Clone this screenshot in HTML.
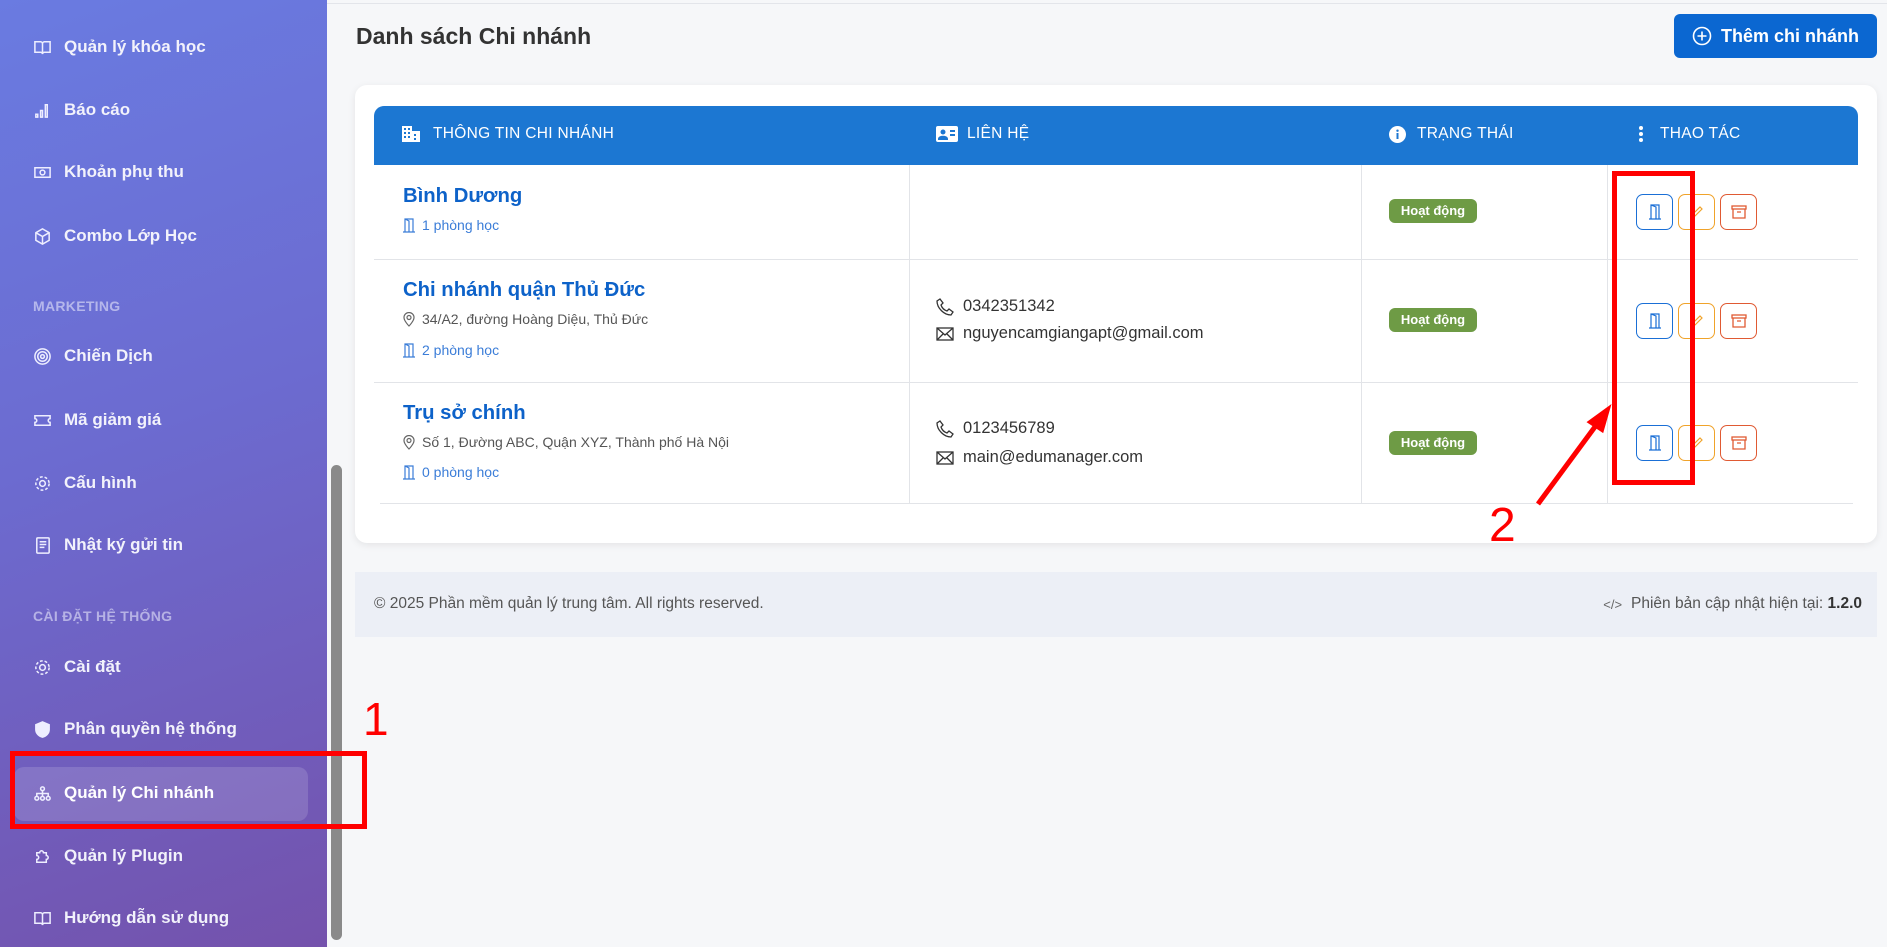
<!DOCTYPE html>
<html><head><meta charset="utf-8"><style>
*{margin:0;padding:0;box-sizing:border-box}
body{width:1887px;height:947px;overflow:hidden;background:#f6f7f9;font-family:"Liberation Sans","DejaVu Sans",sans-serif;position:relative}
.sb{position:absolute;left:0;top:0;width:327px;height:947px;background:linear-gradient(160deg,#6a7be1 0%,#6c6bd0 45%,#7452ac 100%)}
.it{position:absolute;left:33px;height:30px;display:flex;align-items:center;color:#f2f2fb;font-size:17px;font-weight:bold}
.it svg{width:19px;height:19px;margin-right:12px;fill:none;stroke:#eef;stroke-width:1.6}
.sec{position:absolute;left:33px;color:rgba(230,230,250,.6);font-size:14px;font-weight:bold;letter-spacing:.3px}
.ab{position:absolute}
.card{position:absolute;left:355px;top:85px;width:1522px;height:458px;background:#fff;border-radius:12px;box-shadow:0 2px 8px rgba(0,0,0,.08)}
.th{position:absolute;left:374px;top:106px;width:1484px;height:59px;background:#1c77d2;border-radius:10px 10px 0 0}
.ht{position:absolute;top:125px;color:#fff;font-size:15.5px;display:flex;align-items:center;letter-spacing:.3px}
.hl{position:absolute;background:#e2e4e8;height:1px}
.vl{position:absolute;background:#e2e4e8;width:1px}
.nm{position:absolute;left:403px;color:#0d62c9;font-size:20.3px;font-weight:bold}
.ad{position:absolute;left:403px;color:#555;font-size:14px;display:flex;align-items:center}
.rm{position:absolute;left:403px;color:#3b7dd8;font-size:14px;display:flex;align-items:center}
.ct{position:absolute;left:936px;color:#333;font-size:16.5px;display:flex;align-items:center}
.ct svg,.ad svg,.rm svg{margin-right:7px}
.bd{position:absolute;left:1389px;width:88px;height:24px;background:#6e9b45;color:#fff;border-radius:6px;font-size:13px;font-weight:bold;text-align:center;line-height:24px}
.bt{position:absolute;width:37px;height:36px;border:1.5px solid;border-radius:7px;display:flex;align-items:center;justify-content:center}
</style></head><body>
<div class="sb"></div>
<div class="it" style="top:32px"><svg viewBox="0 0 20 20"><path d="M2 4h6a2 2 0 0 1 2 2v11a2 2 0 0 0-2-2H2zM18 4h-6a2 2 0 0 0-2 2v11a2 2 0 0 1 2-2h6z"/></svg>Quản lý khóa học</div>
<div class="it" style="top:95px"><svg viewBox="0 0 20 20"><path d="M3 14h2v3H3zM8 10h2v7H8zM13 4h2v13h-2z"/></svg>Báo cáo</div>
<div class="it" style="top:157px"><svg viewBox="0 0 20 20"><rect x="2" y="5" width="16" height="10"/><circle cx="10" cy="10" r="2.5"/></svg>Khoản phụ thu</div>
<div class="it" style="top:221px"><svg viewBox="0 0 20 20"><path d="M10 2l7 4v8l-7 4-7-4V6zM3 6l7 4 7-4M10 10v8"/></svg>Combo Lớp Học</div>
<div class="sec" style="top:298px">MARKETING</div>
<div class="it" style="top:341px"><svg viewBox="0 0 20 20"><circle cx="10" cy="10" r="8"/><circle cx="10" cy="10" r="5"/><circle cx="10" cy="10" r="2"/></svg>Chiến Dịch</div>
<div class="it" style="top:405px"><svg viewBox="0 0 20 20"><path d="M2 5h16v3a2 2 0 0 0 0 4v3H2v-3a2 2 0 0 0 0-4z"/></svg>Mã giảm giá</div>
<div class="it" style="top:468px"><svg viewBox="0 0 20 20"><circle cx="10" cy="10" r="3"/><circle cx="10" cy="10" r="7" stroke-dasharray="3 2"/></svg>Cấu hình</div>
<div class="it" style="top:530px"><svg viewBox="0 0 20 20"><rect x="4" y="2" width="13" height="16" rx="1"/><path d="M7 6h7M7 9h7M7 12h5"/></svg>Nhật ký gửi tin</div>
<div class="sec" style="top:608px">CÀI ĐẶT HỆ THỐNG</div>
<div class="it" style="top:652px"><svg viewBox="0 0 20 20"><circle cx="10" cy="10" r="3"/><circle cx="10" cy="10" r="7" stroke-dasharray="3 2"/></svg>Cài đặt</div>
<div class="it" style="top:714px"><svg viewBox="0 0 20 20"><path d="M10 2l7 3v5c0 4-3 7-7 8-4-1-7-4-7-8V5z" fill="#eef"/></svg>Phân quyền hệ thống</div>
<div class="ab" style="left:14px;top:767px;width:294px;height:54px;background:rgba(255,255,255,.14);border-radius:10px"></div>
<div class="it" style="top:778px;color:#fff"><svg viewBox="0 0 20 20"><circle cx="10" cy="5" r="2"/><circle cx="4" cy="15" r="2"/><circle cx="10" cy="15" r="2"/><circle cx="16" cy="15" r="2"/><path d="M10 7v6M4 13v-3h12v3"/></svg>Quản lý Chi nhánh</div>
<div class="it" style="top:841px"><svg viewBox="0 0 20 20"><path d="M4 6h3a2 2 0 1 1 4 0h3v3a2 2 0 1 1 0 4v3H4v-3a2 2 0 1 0 0-4z"/></svg>Quản lý Plugin</div>
<div class="it" style="top:903px"><svg viewBox="0 0 20 20"><path d="M2 4h6a2 2 0 0 1 2 2v11a2 2 0 0 0-2-2H2zM18 4h-6a2 2 0 0 0-2 2v11a2 2 0 0 1 2-2h6z"/></svg>Hướng dẫn sử dụng</div>
<div class="ab" style="left:331px;top:465px;width:11px;height:475px;background:#8a8a8a;border-radius:6px"></div>
<div class="ab" style="left:327px;top:0;width:1560px;height:4px;border-bottom:1px solid #e3e5ea;background:#f6f7f9"></div>

<div class="ab" style="left:356px;top:23px;font-size:23px;font-weight:bold;color:#333">Danh sách Chi nhánh</div>
<div class="ab" style="left:1674px;top:14px;width:203px;height:44px;background:#0b67d1;border-radius:6px;color:#fff;font-size:18px;font-weight:bold;display:flex;align-items:center;justify-content:center"><svg width="20" height="20" viewBox="0 0 20 20" style="margin-right:9px" fill="none" stroke="#fff" stroke-width="1.6"><circle cx="10" cy="10" r="8.5"/><path d="M10 5.5v9M5.5 10h9"/></svg>Thêm chi nhánh</div>

<div class="card"></div>
<div class="th"></div>
<div class="ht" style="left:402px"><svg width="18" height="16" viewBox="0 0 18 16" fill="#fff" style="margin-right:13px"><path d="M0 0h10v16H0zM10 5h8v11h-8z"/><path d="M2 2h2v2H2zM6 2h2v2H6zM2 6h2v2H2zM6 6h2v2H6zM2 10h2v2H2zM6 10h2v2H6zM12 8h2v2h-2zM12 12h2v2h-2z" fill="#1c77d2"/></svg>THÔNG TIN CHI NHÁNH</div>
<div class="ht" style="left:936px"><svg width="22" height="16" viewBox="0 0 22 16" style="margin-right:9px"><rect width="22" height="16" rx="2" fill="#fff"/><circle cx="7" cy="6" r="2.5" fill="#1c77d2"/><path d="M3 13c0-3 8-3 8 0zM14 5h5M14 9h5" stroke="#1c77d2" stroke-width="2" fill="#1c77d2"/></svg>LIÊN HỆ</div>
<div class="ht" style="left:1389px"><svg width="17" height="17" viewBox="0 0 17 17" style="margin-right:11px"><circle cx="8.5" cy="8.5" r="8.5" fill="#fff"/><rect x="7.5" y="7" width="2" height="6" fill="#1c77d2"/><circle cx="8.5" cy="4.7" r="1.2" fill="#1c77d2"/></svg>TRẠNG THÁI</div>
<div class="ht" style="left:1638px"><svg width="6" height="16" viewBox="0 0 6 16" fill="#fff" style="margin-right:16px"><circle cx="3" cy="2" r="2"/><circle cx="3" cy="8" r="2"/><circle cx="3" cy="14" r="2"/></svg>THAO TÁC</div>

<div class="vl" style="left:909px;top:165px;height:338px"></div>
<div class="vl" style="left:1361px;top:165px;height:338px"></div>
<div class="vl" style="left:1607px;top:165px;height:338px"></div>
<div class="hl" style="left:374px;top:259px;width:1484px"></div>
<div class="hl" style="left:374px;top:382px;width:1484px"></div>
<div class="hl" style="left:380px;top:503px;width:1473px"></div>

<div class="nm" style="top:185px">Bình Dương</div>
<div class="rm" style="top:217px"><svg width="12" height="15" viewBox="0 0 12 15" fill="none" stroke="#3b7dd8" stroke-width="1.2"><path d="M2 14V1h8v13M0 14h12M2 1l4 2v11"/></svg>1 phòng học</div>

<div class="nm" style="top:279px">Chi nhánh quận Thủ Đức</div>
<div class="ad" style="top:311px"><svg width="12" height="15" viewBox="0 0 12 15" fill="none" stroke="#666" stroke-width="1.2"><path d="M6 14s5-5 5-8.5A5 5 0 0 0 1 5.5C1 9 6 14 6 14z"/><circle cx="6" cy="5.5" r="2"/></svg>34/A2, đường Hoàng Diệu, Thủ Đức</div>
<div class="rm" style="top:342px"><svg width="12" height="15" viewBox="0 0 12 15" fill="none" stroke="#3b7dd8" stroke-width="1.2"><path d="M2 14V1h8v13M0 14h12M2 1l4 2v11"/></svg>2 phòng học</div>
<div class="ct" style="top:297px"><svg width="18" height="18" viewBox="0 0 18 18" fill="none" stroke="#333" stroke-width="1.3" style="margin-right:9px"><path d="M4 1l3 4-2 2c1 3 3 5 6 6l2-2 4 3-2 3C8 17 1 10 1 3z"/></svg>0342351342</div>
<div class="ct" style="top:324px"><svg width="18" height="14" viewBox="0 0 18 14" fill="none" stroke="#333" stroke-width="1.3" style="margin-right:9px"><rect x="1" y="1" width="16" height="12"/><path d="M1 1l8 7 8-7M1 13l6-6M17 13l-6-6"/></svg>nguyencamgiangapt@gmail.com</div>

<div class="nm" style="top:402px">Trụ sở chính</div>
<div class="ad" style="top:434px"><svg width="12" height="15" viewBox="0 0 12 15" fill="none" stroke="#666" stroke-width="1.2"><path d="M6 14s5-5 5-8.5A5 5 0 0 0 1 5.5C1 9 6 14 6 14z"/><circle cx="6" cy="5.5" r="2"/></svg>Số 1, Đường ABC, Quận XYZ, Thành phố Hà Nội</div>
<div class="rm" style="top:464px"><svg width="12" height="15" viewBox="0 0 12 15" fill="none" stroke="#3b7dd8" stroke-width="1.2"><path d="M2 14V1h8v13M0 14h12M2 1l4 2v11"/></svg>0 phòng học</div>
<div class="ct" style="top:419px"><svg width="18" height="18" viewBox="0 0 18 18" fill="none" stroke="#333" stroke-width="1.3" style="margin-right:9px"><path d="M4 1l3 4-2 2c1 3 3 5 6 6l2-2 4 3-2 3C8 17 1 10 1 3z"/></svg>0123456789</div>
<div class="ct" style="top:448px"><svg width="18" height="14" viewBox="0 0 18 14" fill="none" stroke="#333" stroke-width="1.3" style="margin-right:9px"><rect x="1" y="1" width="16" height="12"/><path d="M1 1l8 7 8-7M1 13l6-6M17 13l-6-6"/></svg>main@edumanager.com</div>

<div class="bd" style="top:199px">Hoạt động</div>
<div class="bd" style="top:308px">Hoạt động</div>
<div class="bd" style="top:431px">Hoạt động</div>

<div class="bt" style="left:1636px;top:194px;border-color:#1a6fd6"><svg width="14" height="16" viewBox="0 0 14 16" fill="none" stroke="#1a6fd6" stroke-width="1.2"><path d="M3 15V1h8v14M1 15h12M3 1l5 2v12"/></svg></div>
<div class="bt" style="left:1678px;top:194px;border-color:#f0a32a"><svg width="14" height="14" viewBox="0 0 14 14" fill="none" stroke="#f0a32a" stroke-width="1.2"><path d="M2 12l1-3 7-7 2 2-7 7z"/></svg></div>
<div class="bt" style="left:1720px;top:194px;border-color:#e05a33"><svg width="16" height="14" viewBox="0 0 16 14" fill="none" stroke="#e05a33" stroke-width="1.3"><rect x="1" y="1" width="14" height="3"/><path d="M2 4v9h12V4M6 7h4"/></svg></div>
<div class="bt" style="left:1636px;top:303px;border-color:#1a6fd6"><svg width="14" height="16" viewBox="0 0 14 16" fill="none" stroke="#1a6fd6" stroke-width="1.2"><path d="M3 15V1h8v14M1 15h12M3 1l5 2v12"/></svg></div>
<div class="bt" style="left:1678px;top:303px;border-color:#f0a32a"><svg width="14" height="14" viewBox="0 0 14 14" fill="none" stroke="#f0a32a" stroke-width="1.2"><path d="M2 12l1-3 7-7 2 2-7 7z"/></svg></div>
<div class="bt" style="left:1720px;top:303px;border-color:#e05a33"><svg width="16" height="14" viewBox="0 0 16 14" fill="none" stroke="#e05a33" stroke-width="1.3"><rect x="1" y="1" width="14" height="3"/><path d="M2 4v9h12V4M6 7h4"/></svg></div>
<div class="bt" style="left:1636px;top:425px;border-color:#1a6fd6"><svg width="14" height="16" viewBox="0 0 14 16" fill="none" stroke="#1a6fd6" stroke-width="1.2"><path d="M3 15V1h8v14M1 15h12M3 1l5 2v12"/></svg></div>
<div class="bt" style="left:1678px;top:425px;border-color:#f0a32a"><svg width="14" height="14" viewBox="0 0 14 14" fill="none" stroke="#f0a32a" stroke-width="1.2"><path d="M2 12l1-3 7-7 2 2-7 7z"/></svg></div>
<div class="bt" style="left:1720px;top:425px;border-color:#e05a33"><svg width="16" height="14" viewBox="0 0 16 14" fill="none" stroke="#e05a33" stroke-width="1.3"><rect x="1" y="1" width="14" height="3"/><path d="M2 4v9h12V4M6 7h4"/></svg></div>

<div class="ab" style="left:355px;top:572px;width:1522px;height:65px;background:#eceff6"></div>
<div class="ab" style="left:374px;top:595px;font-size:15.5px;color:#555">© 2025 Phần mềm quản lý trung tâm. All rights reserved.</div>
<div class="ab" style="right:25px;top:595px;font-size:15.5px;color:#555;display:flex;align-items:center"><span style="font-size:13px;margin-right:9px;color:#666">&lt;/&gt;</span>Phiên bản cập nhật hiện tại:&nbsp;<b style="color:#333">1.2.0</b></div>

<div class="ab" style="left:10px;top:751px;width:357px;height:78px;border:5px solid #ff0000"></div>
<div class="ab" style="left:363px;top:692px;font-size:46px;color:#f00;font-family:'Liberation Sans',sans-serif">1</div>
<div class="ab" style="left:1612px;top:171px;width:83px;height:314px;border:5px solid #ff0000"></div>
<svg class="ab" style="left:1530px;top:400px" width="90" height="110" viewBox="0 0 90 110"><path d="M8 104L70 20" stroke="#f00" stroke-width="5"/><path d="M78 9L60 22 72 30z" fill="#f00" stroke="#f00" stroke-width="4"/></svg>
<div class="ab" style="left:1489px;top:498px;font-size:48px;color:#f00">2</div>
</body></html>
